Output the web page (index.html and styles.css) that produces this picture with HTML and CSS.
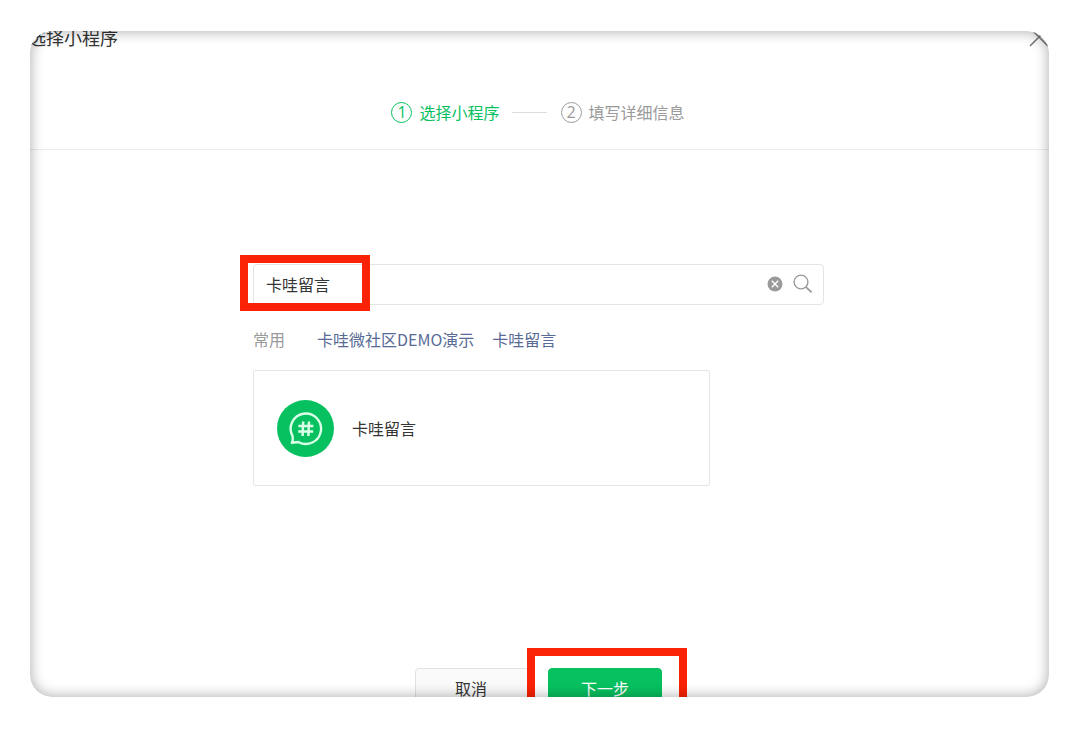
FILE: index.html
```html
<!DOCTYPE html>
<html lang="zh-CN">
<head>
<meta charset="utf-8">
<title>选择小程序</title>
<link rel="stylesheet" href="styles.css">
</head>
<body>
<main class="dialog">
  <header class="dialog-header">
    <h1 class="dialog-title">选择小程序</h1>
    <button class="close" type="button" aria-label="关闭">
      <svg width="20" height="20" viewBox="0 0 20 20" fill="none" stroke="#777" stroke-width="1.5"><path d="M1 1L19 19M19 1L1 19"/></svg>
    </button>
  </header>
  <ol class="steps">
    <li class="step step-active"><span class="step-number">1</span>选择小程序</li>
    <li class="step-line" aria-hidden="true"></li>
    <li class="step"><span class="step-number">2</span>填写详细信息</li>
  </ol>
  <section class="content">
    <form class="search">
      <input class="search-input" type="text" aria-label="搜索小程序" value="卡哇留言">
      <button class="icon-button" type="button" aria-label="清除">
        <svg width="16" height="16" viewBox="0 0 16 16"><circle cx="8" cy="8" r="7.5" fill="#9a9a9a"/><path d="M4.8 4.8L11.2 11.2M11.2 4.8L4.8 11.2" stroke="#fff" stroke-width="1.4"/></svg>
      </button>
      <button class="icon-button" type="button" aria-label="搜索">
        <svg width="20" height="20" viewBox="0 0 20 20" fill="none" stroke="#999"><circle cx="8" cy="8" r="6.9" stroke-width="1.4"/><path d="M12.8 12.8L18.6 18.4" stroke-width="1.8"/></svg>
      </button>
      <span class="mark mark-search"></span>
    </form>
    <nav class="recent">
      <span class="recent-label">常用</span>
      <a class="recent-link" href="#">卡哇微社区DEMO演示</a>
      <a class="recent-link" href="#">卡哇留言</a>
    </nav>
    <article class="result">
      <svg class="logo" width="57" height="57" viewBox="0 0 57 57" fill="none">
        <circle cx="28.5" cy="28.5" r="28.5" fill="#07c160"/>
        <path d="M15.6 36.2A15.2 15.2 0 1 1 21.4 42L14.8 42.8Q16.4 40 15.6 36.2Z" stroke="#d9ffe6" stroke-width="2.4" stroke-linejoin="round"/>
        <path d="M26.2 21.5L25.6 36M32 21.5L31.4 36M21.4 26H36.4M21.2 31.5H36.2" stroke="#d9ffe6" stroke-width="2.5"/>
      </svg>
      <span class="result-name">卡哇留言</span>
    </article>
  </section>
  <footer class="actions">
    <button class="button" type="button">取消</button>
    <div class="next">
      <button class="button button-primary" type="button">下一步</button>
      <span class="mark mark-next"></span>
    </div>
  </footer>
</main>
</body>
</html>
```
FILE: styles.css
```css
* {
  box-sizing: border-box;
}

body {
  display: flex;
  height: 100vh;
  margin: 0;
  padding: 31px 31px 32px 30px;
  background: #fff;
  color: #353535;
  font: 16px/24px "Noto Sans CJK SC", sans-serif;
}

button,
input {
  font: inherit;
  color: inherit;
}

.dialog {
  position: relative;
  display: flex;
  flex: 1;
  flex-direction: column;
  overflow: hidden;
  border-radius: 22px;
}

.dialog::after {
  content: "";
  position: absolute;
  inset: 0;
  border-radius: 22px;
  box-shadow: inset 0 0 14px rgba(0, 0, 0, 0.34);
  pointer-events: none;
}

.dialog-header {
  display: flex;
  flex: none;
  align-items: flex-start;
  justify-content: space-between;
  height: 48px;
  margin: -6px 0 0 -2px;
}

.dialog-title {
  margin: 0;
  font-size: 18px;
  font-weight: 400;
  line-height: 24px;
}

.close {
  display: flex;
  padding: 2px 0 0;
  border: 0;
  background: none;
}

.steps {
  display: flex;
  flex: none;
  align-items: center;
  justify-content: center;
  height: 77px;
  margin: 0;
  padding: 2px 3px 0 0;
  border-bottom: 1px solid #ebebeb;
  list-style: none;
}

.step {
  display: flex;
  align-items: center;
  gap: 7px;
  color: #9a9a9a;
}

.step-active {
  color: #07c160;
}

.step-number {
  width: 21px;
  height: 21px;
  border: 1px solid;
  border-radius: 50%;
  font-family: "Open Sans", sans-serif;
  line-height: 19px;
  text-align: center;
}

.step-line {
  width: 35px;
  height: 1px;
  margin: 0 14px 0 12px;
  background: #ddd;
}

.content {
  flex: 1;
  width: 100%;
  max-width: 573px;
  margin: 0 auto;
  padding: 114px 2px 0 0;
}

.search {
  position: relative;
  display: flex;
  align-items: center;
  gap: 10px;
  height: 41px;
  padding: 0 10px 2px 12px;
  border: 1px solid #e4e4e4;
  border-radius: 4px;
}

.search-input {
  flex: 1;
  min-width: 0;
  padding: 0;
  border: 0;
  outline: 0;
  background: none;
}

.icon-button {
  display: flex;
  padding: 0;
  border: 0;
  background: none;
}

.mark {
  position: absolute;
  border: 8px solid #fa2305;
  pointer-events: none;
}

.mark-search {
  top: -10px;
  left: -14px;
  width: 130px;
  height: 56px;
}

.recent {
  display: flex;
  margin: 22px 0 19px;
}

.recent-label {
  margin-right: 32px;
  color: #9a9a9a;
}

.recent-link {
  margin-right: 18px;
  color: #576b95;
  text-decoration: none;
}

.result {
  display: flex;
  align-items: center;
  gap: 18px;
  width: 80%;
  height: 116px;
  padding: 0 23px;
  border: 1px solid #e4e7e9;
  border-radius: 2px;
}

.actions {
  display: flex;
  flex: none;
  justify-content: center;
  gap: 19px;
  height: 29px;
  padding-right: 2px;
}

.button {
  display: block;
  width: 114px;
  height: 41px;
  padding: 0 2px 2px 0;
  border: 1px solid #e2e2e2;
  border-radius: 4px;
  background: #fafafa;
}

.button-primary {
  padding-right: 0;
  border-color: #07c160;
  background: #07c160;
  color: #fff;
}

.next {
  position: relative;
}

.mark-next {
  top: -20px;
  left: -21px;
  width: 160px;
  height: 80px;
}
```
